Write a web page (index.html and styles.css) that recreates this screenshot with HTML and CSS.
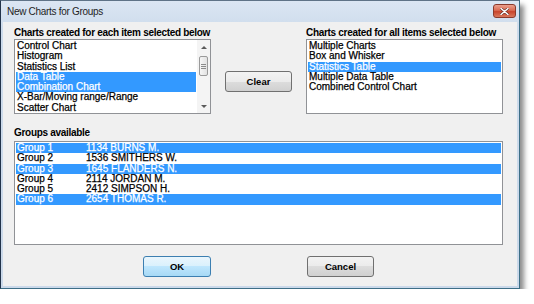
FILE: index.html
```html
<!DOCTYPE html>
<html lang="en">
<head>
    <meta charset="UTF-8">
    <title>New Charts for Groups</title>
    <link rel="stylesheet" href="styles.css">
</head>
<body>

    <div class="window">
        <div class="titlebar">
            <span class="title">New Charts for Groups</span>
            <button class="close-btn" title="Close">
                <svg width="9" height="7" viewBox="0 0 9 7">
                    <path d="M1 0.5 L8 6.5 M8 0.5 L1 6.5" stroke="#5a2a22" stroke-width="2.6" stroke-linecap="round"/>
                    <path d="M1 0.5 L8 6.5 M8 0.5 L1 6.5" stroke="#fff" stroke-width="1.5" stroke-linecap="round"/>
                </svg>
            </button>
        </div>

        <div class="client">
            <div class="top-row">
                <div class="list-col">
                    <div class="label">Charts created for each item selected below</div>
                    <div class="listbox">
                        <ul class="items">
                            <li>Control Chart</li>
                            <li>Histogram</li>
                            <li>Statistics List</li>
                            <li class="selected">Data Table</li>
                            <li class="selected">Combination Chart</li>
                            <li>X-Bar/Moving range/Range</li>
                            <li>Scatter Chart</li>
                        </ul>
                        <div class="scrollbar">
                            <span class="arrow"><i class="tri-up"></i></span>
                            <span class="thumb"><i></i><i></i><i></i></span>
                            <span class="track"></span>
                            <span class="arrow"><i class="tri-down"></i></span>
                        </div>
                    </div>
                </div>

                <button class="button clear-btn">Clear</button>

                <div class="list-col">
                    <div class="label">Charts created for all items selected below</div>
                    <div class="listbox">
                        <ul class="items">
                            <li>Multiple Charts</li>
                            <li>Box and Whisker</li>
                            <li class="selected">Statistics Table</li>
                            <li>Multiple Data Table</li>
                            <li>Combined Control Chart</li>
                        </ul>
                    </div>
                </div>
            </div>

            <div class="label groups-label">Groups available</div>
            <div class="listbox groups">
                <ul class="items">
                    <li class="selected"><span class="group-name">Group 1</span>1134 BURNS M.</li>
                    <li><span class="group-name">Group 2</span>1536 SMITHERS W.</li>
                    <li class="selected"><span class="group-name">Group 3</span>1645 FLANDERS N.</li>
                    <li><span class="group-name">Group 4</span>2114 JORDAN M.</li>
                    <li><span class="group-name">Group 5</span>2412 SIMPSON H.</li>
                    <li class="selected"><span class="group-name">Group 6</span>2654 THOMAS R.</li>
                </ul>
            </div>

            <div class="actions">
                <button class="button default ok-btn">OK</button>
                <button class="button cancel-btn">Cancel</button>
            </div>
        </div>
    </div>

</body>
</html>
```

FILE: styles.css
```css
body {
    margin: 0;
    background: #fff;
    font-family: "Liberation Sans", Arial, sans-serif;
    color: #000;
}

.window {
    width: 520px;
    height: 289px;
    box-sizing: border-box;
    border: 1px solid #3d6e86;
    border-left-color: #22334a;
    border-top-color: #5f7387;
    background: linear-gradient(#dbe6f3, #cddbeb 30px, #cbd9ea);
    box-shadow: 4px 5px 5px rgba(0, 0, 0, 0.45);
    display: flex;
    flex-direction: column;
}

.titlebar {
    height: 21px;
    display: flex;
    justify-content: space-between;
    align-items: flex-start;
    padding-left: 6px;
}

.title {
    font-size: 10px;
    letter-spacing: -0.3px;
    line-height: 21px;
    color: #1e1e1e;
}

.close-btn {
    width: 23px;
    height: 14px;
    margin: 3px 3px 0 0;
    padding: 0;
    border: 1px solid #8a3a2c;
    border-radius: 3px;
    background: linear-gradient(#eba08e, #d96a52 45%, #c9452c 55%, #d9785c);
    display: flex;
    align-items: center;
    justify-content: center;
}

.client {
    flex: 1;
    margin: 0 2px 2px 2px;
    background: #f0f0f0;
    padding: 5px 0 0 11px;
}

.top-row {
    display: flex;
    align-items: flex-start;
}

.list-col {
    width: 197px;
}

.label {
    height: 12px;
    line-height: 12px;
    font-size: 10px;
    font-weight: bold;
    letter-spacing: -0.3px;
    white-space: nowrap;
}

.listbox {
    height: 75px;
    box-sizing: border-box;
    border: 1px solid #909296;
    background: #fff;
    display: flex;
}

.items {
    list-style: none;
    margin: 0;
    padding: 1px;
    flex: 1;
}

.items li {
    height: 10.3px;
    line-height: 10.3px;
    font-size: 10px;
    padding-left: 1px;
    white-space: nowrap;
    -webkit-text-stroke: 0.25px currentColor;
}

.items li.selected {
    background: #3399ff;
    color: #fff;
}

.scrollbar {
    width: 13px;
    background: #f4f4f4;
    display: flex;
    flex-direction: column;
    align-items: center;
}

.arrow {
    height: 14px;
    width: 100%;
    display: flex;
    align-items: center;
    justify-content: center;
}

.tri-up {
    border-left: 3px solid transparent;
    border-right: 3px solid transparent;
    border-bottom: 3px solid #5a5a5a;
}

.tri-down {
    border-left: 3px solid transparent;
    border-right: 3px solid transparent;
    border-top: 3px solid #5a5a5a;
}

.thumb {
    width: 9px;
    height: 20px;
    margin-top: 2px;
    box-sizing: border-box;
    border: 1px solid #9a9a9a;
    border-radius: 2px;
    background: linear-gradient(to right, #f6f6f6, #e2e2e2);
    display: flex;
    flex-direction: column;
    align-items: center;
    justify-content: center;
    gap: 1px;
}

.thumb i {
    width: 5px;
    height: 1px;
    background: #8a8a8a;
}

.track {
    flex: 1;
}

.button {
    height: 21px;
    box-sizing: border-box;
    border: 1px solid #707070;
    border-radius: 3px;
    background: linear-gradient(#f3f3f3, #ebebeb 50%, #dddddd 50%, #d0d0d0);
    font-family: "Liberation Sans", Arial, sans-serif;
    font-size: 9.5px;
    font-weight: bold;
    color: #000;
    padding: 0;
}

.button.default {
    border-color: #3c7fb1;
    background: linear-gradient(#eaf6fd, #d9f0fc 50%, #bee6fd 50%, #a7d9f5);
}

.clear-btn {
    width: 67px;
    margin: 44px 14px 0 14px;
}

.groups-label {
    margin-top: 13px;
    margin-bottom: 2px;
}

.groups {
    width: 489px;
    height: 104px;
}

.group-name {
    display: inline-block;
    width: 69px;
}

.actions {
    display: flex;
    margin-top: 11px;
    padding-left: 129px;
}

.ok-btn {
    width: 68px;
}

.cancel-btn {
    width: 67px;
    margin-left: 96px;
}
```
